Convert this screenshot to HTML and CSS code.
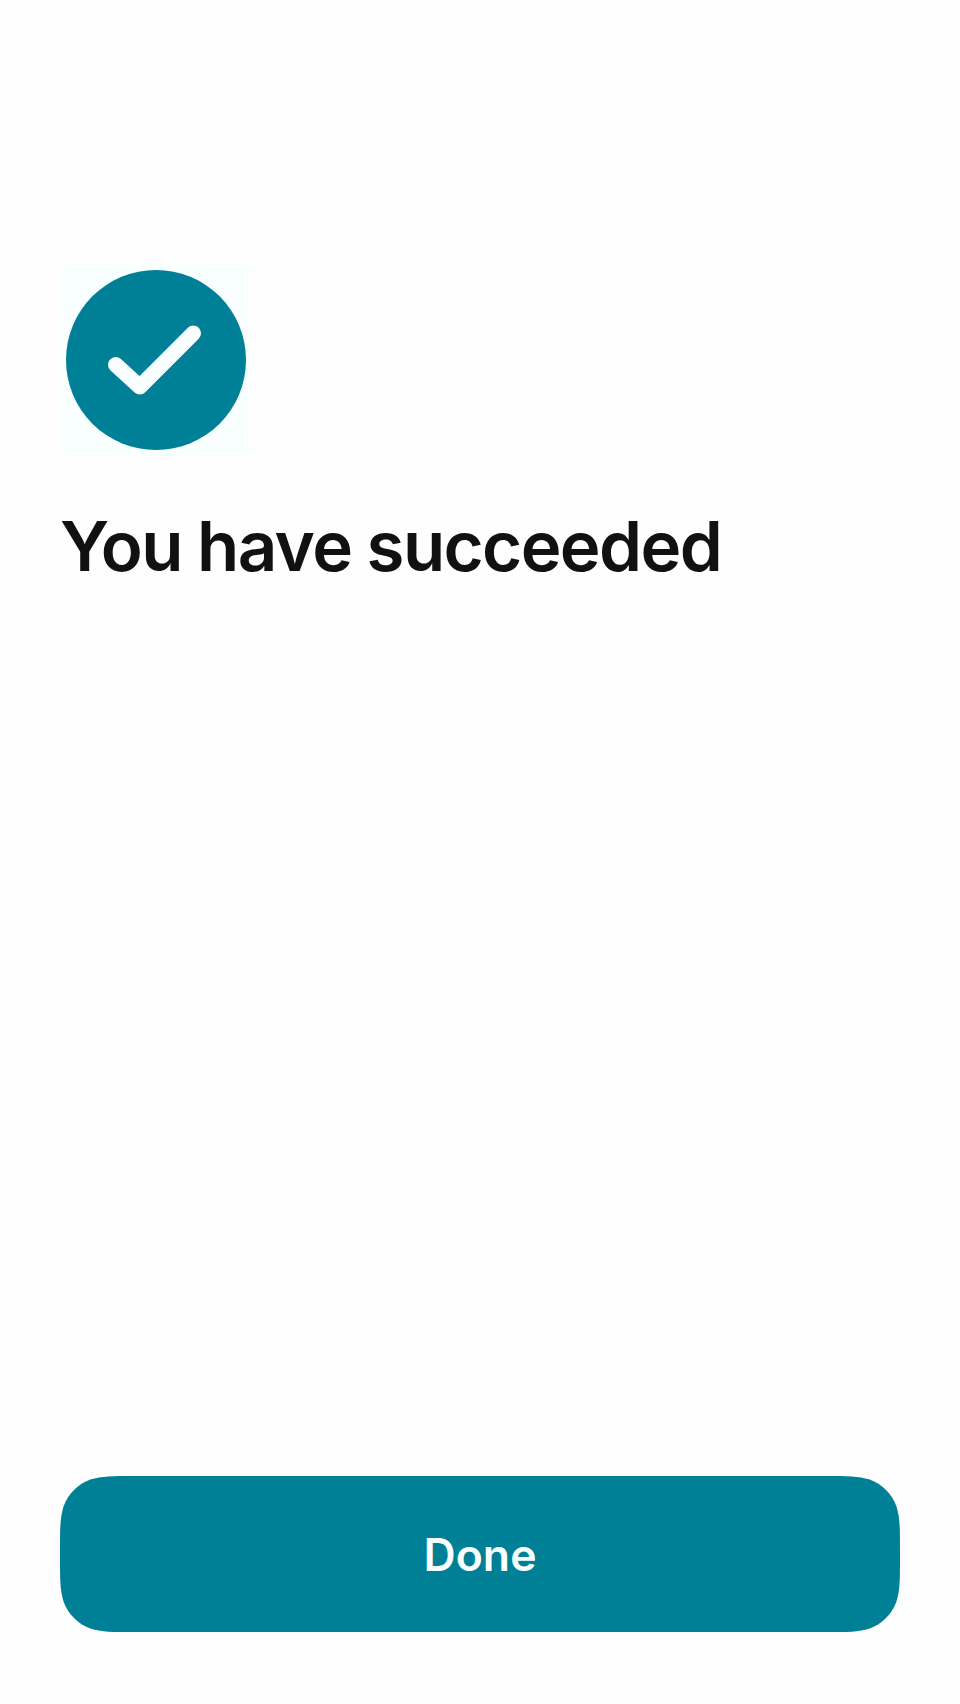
FILE: index.html
```html
<!DOCTYPE html>
<html lang="en">
<head>
<meta charset="utf-8">
<title>Success</title>
<link rel="stylesheet" href="styles.css">
</head>
<body>
<main class="screen">
  <svg class="status" viewBox="0 0 192 192" aria-hidden="true">
    <circle class="status-disc" cx="96" cy="96" r="90"/>
    <path class="status-check" d="M55.700 100.800L79.800 122.700L133.300 69.200"/>
  </svg>
  <h1 class="title">You have succeeded</h1>
  <button class="done" type="button">
    <svg class="done-shape" viewBox="0 0 840 156" aria-hidden="true"><path d="M73.380 0H766.620C787.750 0 798.320 0 809.690 3.600C822.100 8.110 831.890 17.900 836.400 30.310C840 41.680 840 52.250 840 73.380V82.620C840 103.750 840 114.320 836.400 125.690C831.890 138.100 822.100 147.890 809.690 152.400C798.320 156 787.750 156 766.620 156H73.380C52.250 156 41.680 156 30.310 152.400C17.900 147.890 8.110 138.100 3.600 125.690C0 114.320 0 103.750 0 82.620V73.380C0 52.250 0 41.680 3.600 30.310C8.110 17.900 17.900 8.110 30.310 3.600C41.680 0 52.250 0 73.380 0Z"/></svg>
    <span class="done-label">Done</span>
  </button>
</main>
</body>
</html>
```
FILE: styles.css
```css
body { margin: 0; background: #fefefe; font-family: Inter, sans-serif; }
.screen { box-sizing: border-box; height: 1704px; padding: 264px 60px 72px; display: flex; flex-direction: column; align-items: flex-start; }
.status { width: 192px; height: 192px; background: #f9feff; }
.status-disc { fill: #008097; }
.status-check { fill: none; stroke: #f9feff; stroke-width: 15.4; stroke-linecap: round; stroke-linejoin: round; }
.title { margin: 47px 0 0; font-size: 69px; line-height: 86px; font-weight: 640; letter-spacing: -1.62px; word-spacing: -.5px; color: #111; white-space: nowrap; }
.done { display: grid; place-items: center; width: 840px; height: 156px; margin-top: auto; padding: 0; border: 0; background: none; font: 620 44.5px/58px Inter, sans-serif; letter-spacing: .1px; color: #faffff; }
.done-shape, .done-label { grid-area: 1 / 1; }
.done-shape { width: 840px; height: 156px; fill: #008097; }
.done-label { z-index: 1; padding-top: 2px; }
```
